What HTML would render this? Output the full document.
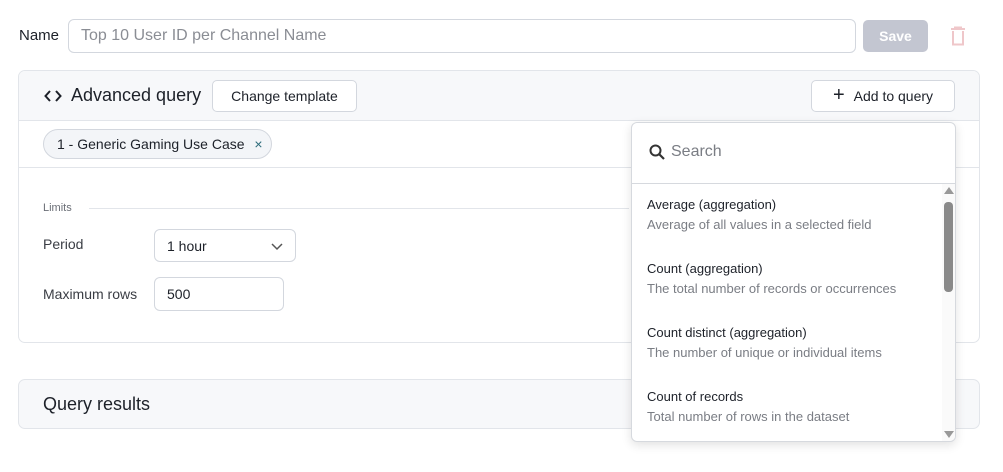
<!DOCTYPE html>
<html><head><style>
*{box-sizing:border-box;margin:0;padding:0}
body{width:1003px;height:472px;background:#fff;font-family:"Liberation Sans",sans-serif;color:#1d2129;position:relative;overflow:hidden}
.a{position:absolute}
.btn{position:absolute;border:1px solid #d3d7de;border-radius:5px;background:#fff;font-size:14px;display:flex;align-items:center;justify-content:center;color:#1d2129}
.inp{position:absolute;border:1px solid #d3d7de;border-radius:6px;background:#fff;font-size:14px;display:flex;align-items:center;padding-left:12px}
</style></head><body>
<div class="a" style="left:19px;top:27px;font-size:15px">Name</div>
<div class="inp" style="left:68px;top:19px;width:788px;height:34px;font-size:16px;color:#8a8d94">Top 10 User ID per Channel Name</div>
<div class="a" style="left:863px;top:20px;width:65px;height:32px;background:#c3c6d1;border-radius:5px;color:#fff;font-size:14px;font-weight:bold;display:flex;align-items:center;justify-content:center">Save</div>
<svg class="a" style="left:949px;top:26px" width="18" height="20" viewBox="0 0 18 20"><path d="M2 3H16M6 3V1.5H12V3M4 5V18.5H14V5" fill="none" stroke="#efc7ca" stroke-width="2"/></svg>

<div class="a" style="left:18px;top:70px;width:962px;height:273px;border:1px solid #e2e5ea;border-radius:7px;overflow:hidden">
 <div class="a" style="left:0;top:0;width:960px;height:50px;background:#f7f8fa;border-bottom:1px solid #e2e5ea"></div>
 <div class="a" style="left:0;top:96px;width:960px;height:1px;background:#e2e5ea"></div>
</div>
<svg class="a" style="left:44px;top:90px" width="18" height="12" viewBox="0 0 18 12"><path d="M6 1L1.5 6L6 11M12 1L16.5 6L12 11" fill="none" stroke="#1d2129" stroke-width="2"/></svg>
<div class="a" style="left:71px;top:85px;font-size:18px">Advanced query</div>
<div class="btn" style="left:212px;top:80px;width:145px;height:32px">Change template</div>
<div class="btn" style="left:811px;top:80px;width:144px;height:32px"><span style="font-size:20px;font-weight:300;margin-right:9px;margin-top:-2px">+</span>Add to query</div>
<div class="a" style="left:43px;top:129px;width:229px;height:30px;border:1px solid #d3d7de;border-radius:15px;background:#f3f5f8;font-size:14px;padding:6px 0 0 13px">1 - Generic Gaming Use Case <span style="color:#2d6b7a;margin-left:6px">×</span></div>

<div class="a" style="left:43px;top:202px;font-size:11px;color:#6a6e76">Limits</div>
<div class="a" style="left:89px;top:208px;width:540px;height:1px;background:#e2e5ea"></div>
<div class="a" style="left:43px;top:236px;font-size:14px;color:#3a3d44">Period</div>
<div class="inp" style="left:154px;top:229px;width:142px;height:33px">1 hour
<svg class="a" style="left:116px;top:13px" width="12" height="8" viewBox="0 0 12 8"><path d="M1 1L6 6L11 1" fill="none" stroke="#555" stroke-width="1.5"/></svg></div>
<div class="a" style="left:43px;top:286px;font-size:14px;color:#3a3d44">Maximum rows</div>
<div class="inp" style="left:154px;top:277px;width:130px;height:34px">500</div>

<div class="a" style="left:18px;top:379px;width:962px;height:50px;border:1px solid #e2e5ea;border-radius:7px;background:#f7f8fa"></div>
<div class="a" style="left:43px;top:394px;font-size:18px">Query results</div>

<div class="a" style="left:631px;top:122px;width:325px;height:320px;background:#fff;border:1px solid #d6d9de;border-radius:6px;box-shadow:0 3px 10px rgba(0,0,0,.12);overflow:hidden">
 <svg class="a" style="left:17px;top:21px" width="17" height="17" viewBox="0 0 17 17"><circle cx="6.5" cy="6.5" r="5" fill="none" stroke="#333" stroke-width="2"/><path d="M10 10L15 15" stroke="#333" stroke-width="2.2"/></svg>
 <div class="a" style="left:39px;top:20px;font-size:16px;color:#7a7d84">Search</div>
 <div class="a" style="left:0;top:60px;width:325px;height:1px;background:#d6d9de"></div>
 <div class="a" style="left:310px;top:61px;width:14px;height:259px;background:#fafafa"></div>
 <div class="a" style="left:312px;top:64px;width:0;height:0;border-left:5px solid transparent;border-right:5px solid transparent;border-bottom:7px solid #999"></div>
 <div class="a" style="left:312px;top:79px;width:9px;height:90px;background:#8a8a8a;border-radius:4px"></div>
 <div class="a" style="left:312px;top:308px;width:0;height:0;border-left:5px solid transparent;border-right:5px solid transparent;border-top:7px solid #999"></div>
 <div class="a" style="left:15px;top:72px;font-size:13px;line-height:20px">Average (aggregation)<br><span style="color:#7a7d84">Average of all values in a selected field</span></div>
 <div class="a" style="left:15px;top:136px;font-size:13px;line-height:20px">Count (aggregation)<br><span style="color:#7a7d84">The total number of records or occurrences</span></div>
 <div class="a" style="left:15px;top:200px;font-size:13px;line-height:20px">Count distinct (aggregation)<br><span style="color:#7a7d84">The number of unique or individual items</span></div>
 <div class="a" style="left:15px;top:264px;font-size:13px;line-height:20px">Count of records<br><span style="color:#7a7d84">Total number of rows in the dataset</span></div>
</div>
</body></html>
